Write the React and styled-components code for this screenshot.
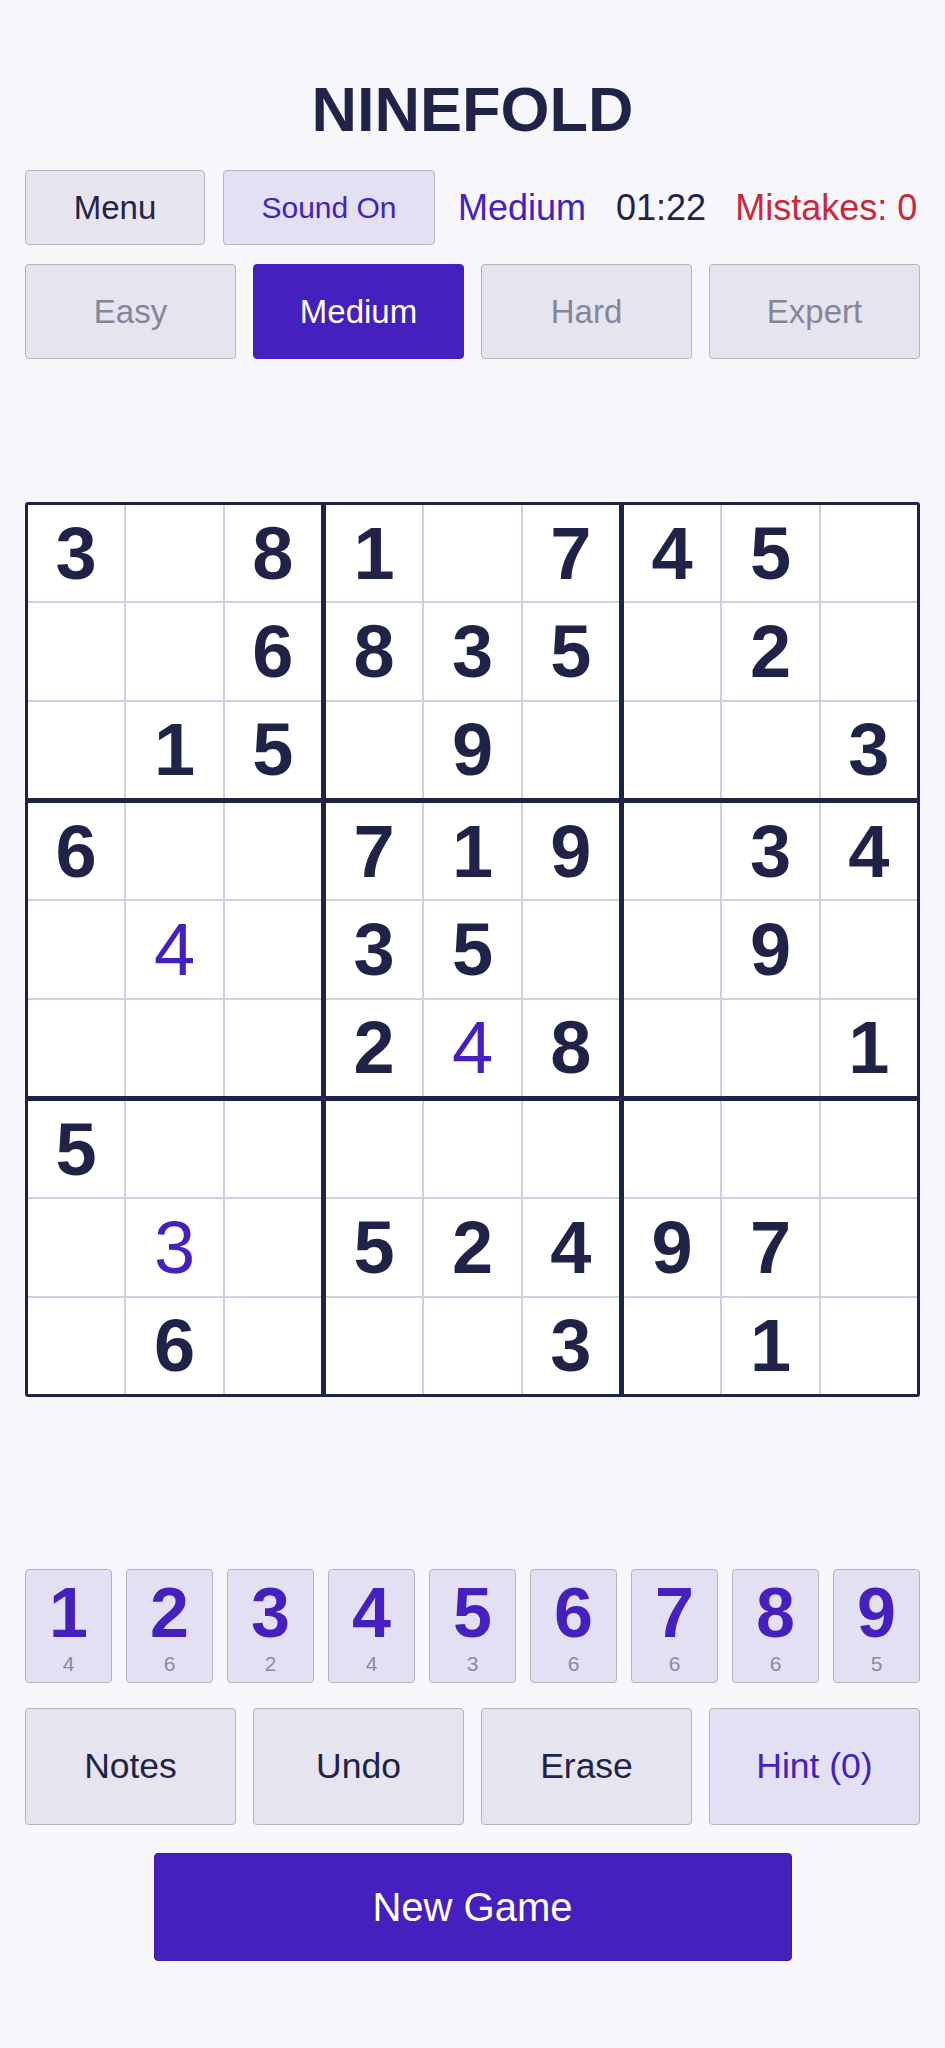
import React from 'react';
import styled, { createGlobalStyle } from 'styled-components';

const GlobalStyle = createGlobalStyle`
  html, body {
    margin: 0;
    padding: 0;
    background: #f6f6fb;
    font-family: 'Liberation Sans', Arial, sans-serif;
  }
`;

const PURPLE = '#4520bf';
const NAVY = '#1f2347';

const Page = styled.div`
  box-sizing: border-box;
  width: 945px;
  min-height: 2048px;
  padding: 78px 25px 0;
  display: flex;
  flex-direction: column;
  background: #f6f6fb;
`;

const Title = styled.h1`
  margin: 0 0 30px;
  text-align: center;
  font-size: 63px;
  line-height: 62px;
  font-weight: 700;
  color: ${NAVY};
`;

const TopBar = styled.div`
  display: flex;
  align-items: center;
  height: 75px;
`;

const Button = styled.button`
  box-sizing: border-box;
  font-family: inherit;
  border: 1px solid #b4b3c0;
  border-radius: 4px;
  background: ${p => (p.$tint ? '#e3e0f4' : '#e6e5ef')};
  color: ${p => (p.$tint ? PURPLE : NAVY)};
  padding: 0;
  cursor: pointer;
`;

const BarButton = styled(Button)`
  height: 75px;
  width: ${p => p.$w}px;
  margin-right: 18px;
  font-size: ${p => p.$size}px;
`;

const Info = styled.span`
  font-size: 36px;
  color: ${p => p.$color};
  margin-left: ${p => p.$gap}px;
`;

const DifficultyRow = styled.div`
  display: flex;
  gap: 17px;
  margin-top: 19px;
`;

const DiffButton = styled(Button)`
  flex: 1;
  height: 95px;
  font-size: 33px;
  background: ${p => (p.$active ? PURPLE : '#e6e5ef')};
  border-color: ${p => (p.$active ? PURPLE : '#b4b3c0')};
  color: ${p => (p.$active ? '#ffffff' : '#858599')};
`;

const Board = styled.div`
  box-sizing: border-box;
  width: 895px;
  height: 895px;
  margin-top: 143px;
  padding: 3px;
  background: ${NAVY};
  border-radius: 3px;
  display: grid;
  grid-template-columns: repeat(3, 1fr);
  grid-template-rows: repeat(3, 1fr);
  gap: 5px;
`;

const Box = styled.div`
  display: grid;
  grid-template-columns: repeat(3, 1fr);
  grid-template-rows: repeat(3, 1fr);
  gap: 2px;
  background: #cfcfe3;
`;

const Cell = styled.div`
  background: #ffffff;
  display: flex;
  align-items: center;
  justify-content: center;
  font-size: 74px;
  font-weight: ${p => (p.$user ? 400 : 700)};
  color: ${p => (p.$user ? PURPLE : NAVY)};
`;

const Pad = styled.div`
  display: flex;
  gap: 14px;
  margin-top: 172px;
`;

const PadButton = styled(Button)`
  flex: 1;
  height: 114px;
  display: flex;
  flex-direction: column;
  align-items: center;
  justify-content: center;
  gap: 5px;
`;

const PadDigit = styled.span`
  font-size: 70px;
  line-height: 70px;
  font-weight: 700;
  color: ${PURPLE};
`;

const PadCount = styled.span`
  font-size: 21px;
  line-height: 21px;
  color: #8a8a9c;
`;

const ActionRow = styled.div`
  display: flex;
  gap: 17px;
  margin-top: 25px;
`;

const ActionButton = styled(Button)`
  flex: 1;
  height: 117px;
  font-size: 35.5px;
`;

const NewGame = styled(Button)`
  align-self: center;
  width: 638px;
  height: 108px;
  margin-top: 28px;
  background: ${PURPLE};
  border-color: #3a1aa6;
  color: #ffffff;
  font-size: 40px;
`;

// 0 = empty, negative = entered by player
const grid = [
  [3, 0, 8, 1, 0, 7, 4, 5, 0],
  [0, 0, 6, 8, 3, 5, 0, 2, 0],
  [0, 1, 5, 0, 9, 0, 0, 0, 3],
  [6, 0, 0, 7, 1, 9, 0, 3, 4],
  [0, -4, 0, 3, 5, 0, 0, 9, 0],
  [0, 0, 0, 2, -4, 8, 0, 0, 1],
  [5, 0, 0, 0, 0, 0, 0, 0, 0],
  [0, -3, 0, 5, 2, 4, 9, 7, 0],
  [0, 6, 0, 0, 0, 3, 0, 1, 0],
];

const counts = [4, 6, 2, 4, 3, 6, 6, 6, 5];

const boxCells = b => {
  const br = Math.floor(b / 3) * 3;
  const bc = (b % 3) * 3;
  const out = [];
  for (let r = 0; r < 3; r++) {
    for (let c = 0; c < 3; c++) out.push(grid[br + r][bc + c]);
  }
  return out;
};

export default function App() {
  return (
    <Page>
      <GlobalStyle />
      <Title>NINEFOLD</Title>
      <TopBar>
        <BarButton $w={180} $size={33}>Menu</BarButton>
        <BarButton $w={212} $size={30} $tint>Sound On</BarButton>
        <Info $color={PURPLE} $gap={5}>Medium</Info>
        <Info $color={NAVY} $gap={30}>01:22</Info>
        <Info $color="#c9283a" $gap={29}>Mistakes: 0</Info>
      </TopBar>
      <DifficultyRow>
        {['Easy', 'Medium', 'Hard', 'Expert'].map(d => (
          <DiffButton key={d} $active={d === 'Medium'}>{d}</DiffButton>
        ))}
      </DifficultyRow>
      <Board>
        {[0, 1, 2, 3, 4, 5, 6, 7, 8].map(b => (
          <Box key={b}>
            {boxCells(b).map((v, i) => (
              <Cell key={i} $user={v < 0}>{v ? Math.abs(v) : ''}</Cell>
            ))}
          </Box>
        ))}
      </Board>
      <Pad>
        {counts.map((n, i) => (
          <PadButton key={i} $tint>
            <PadDigit>{i + 1}</PadDigit>
            <PadCount>{n}</PadCount>
          </PadButton>
        ))}
      </Pad>
      <ActionRow>
        <ActionButton>Notes</ActionButton>
        <ActionButton>Undo</ActionButton>
        <ActionButton>Erase</ActionButton>
        <ActionButton $tint>Hint (0)</ActionButton>
      </ActionRow>
      <NewGame>New Game</NewGame>
    </Page>
  );
}
